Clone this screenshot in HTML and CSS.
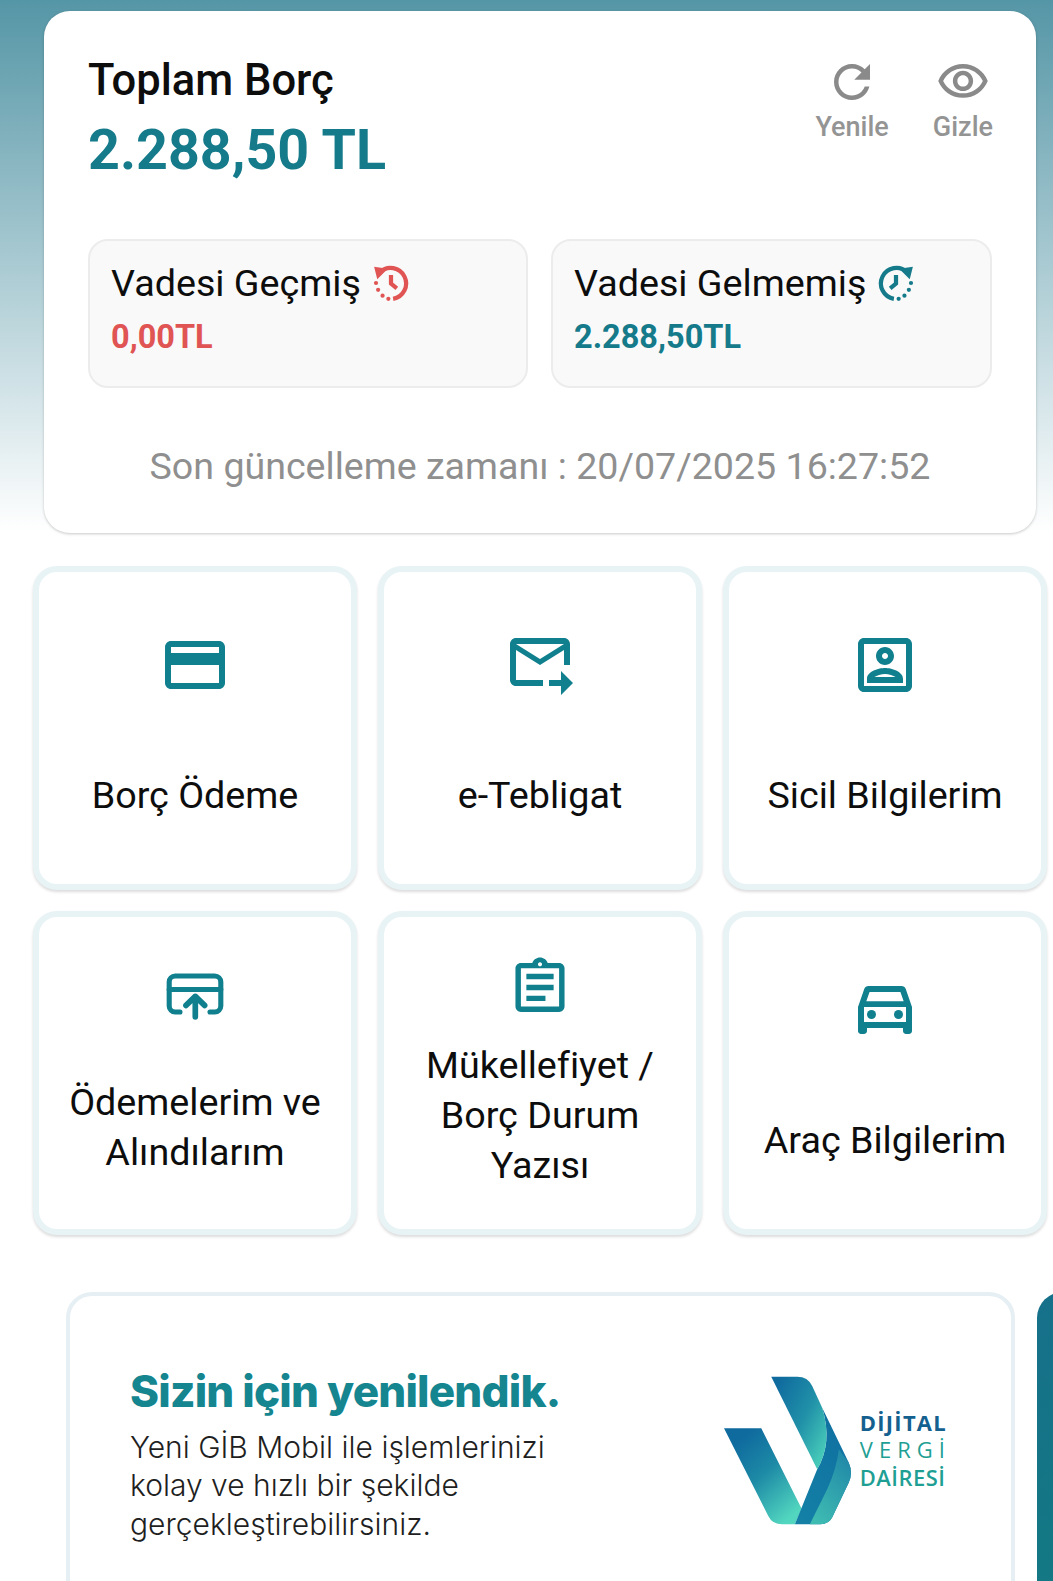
FILE: index.html
```html
<!DOCTYPE html>
<html lang="tr">
<head>
<meta charset="utf-8">
<title>GİB Mobil</title>
<link rel="stylesheet" href="styles.css">
</head>
<body>
<section class="summary">
  <header class="summary-head">
    <div>
      <h1 class="summary-title">Toplam Borç</h1>
      <div class="summary-total">2.288,50 TL</div>
    </div>
    <div class="actions">
      <button class="action action-refresh">
        <svg class="action-icon" viewBox="0 0 24 24"><path d="M17.65 6.35C16.2 4.9 14.21 4 12 4c-4.42 0-7.99 3.58-7.99 8s3.57 8 7.99 8c3.73 0 6.84-2.55 7.73-6h-2.08c-.82 2.33-3.04 4-5.65 4-3.31 0-6-2.69-6-6s2.69-6 6-6c1.66 0 3.14.69 4.22 1.78L13 11h7V4l-2.35 2.35z"/></svg>
        <span>Yenile</span>
      </button>
      <button class="action action-hide">
        <svg class="action-icon" viewBox="0 0 24 24"><path d="M12 6c3.79 0 7.17 2.13 8.82 5.5C19.17 14.87 15.79 17 12 17s-7.17-2.13-8.82-5.5C4.83 8.13 8.21 6 12 6m0-2C7 4 2.73 7.11 1 11.5 2.73 15.89 7 19 12 19s9.27-3.11 11-7.5C21.27 7.11 17 4 12 4zm0 5c1.38 0 2.5 1.12 2.5 2.5S13.38 14 12 14s-2.5-1.12-2.5-2.5S10.62 9 12 9m0-2c-2.48 0-4.5 2.02-4.5 4.5S9.52 16 12 16s4.5-2.02 4.5-4.5S14.48 7 12 7z"/></svg>
        <span>Gizle</span>
      </button>
    </div>
  </header>
  <div class="dues">
    <div class="due">
      <div class="due-label">Vadesi Geçmiş
        <svg class="due-icon due-icon-past" viewBox="0 0 36 36">
          <path class="clock-arc" d="M7.5 7.5A14.8 14.8 0 1 1 20 33"/>
          <path class="clock-head" d="M2 2.5l13 2-10 10z"/>
          <path class="clock-hand" d="M18 10.5v8l5.5 4.5"/>
          <circle class="clock-dot" cx="3.8" cy="18" r="2"/>
          <circle class="clock-dot" cx="5.8" cy="24.5" r="2"/>
          <circle class="clock-dot" cx="10" cy="30" r="2"/>
          <circle class="clock-dot" cx="15.5" cy="33" r="2"/>
        </svg>
      </div>
      <div class="due-value due-value-past">0,00TL</div>
    </div>
    <div class="due">
      <div class="due-label">Vadesi Gelmemiş
        <svg class="due-icon due-icon-future" viewBox="0 0 36 36">
          <g transform="matrix(-1 0 0 1 36 0)">
            <path class="clock-arc" d="M7.5 7.5A14.8 14.8 0 1 1 20 33"/>
            <path class="clock-head" d="M2 2.5l13 2-10 10z"/>
            <path class="clock-hand" d="M18 10.5v8l5.5 4.5"/>
            <circle class="clock-dot" cx="3.8" cy="18" r="2"/>
            <circle class="clock-dot" cx="5.8" cy="24.5" r="2"/>
            <circle class="clock-dot" cx="10" cy="30" r="2"/>
            <circle class="clock-dot" cx="15.5" cy="33" r="2"/>
          </g>
        </svg>
      </div>
      <div class="due-value due-value-future">2.288,50TL</div>
    </div>
  </div>
  <p class="updated">Son güncelleme zamanı : 20/07/2025 16:27:52</p>
</section>

<nav class="tiles">
  <a class="tile">
    <svg class="tile-icon" viewBox="0 0 24 24"><path d="M20 4H4c-1.11 0-1.99.89-1.99 2L2 18c0 1.11.89 2 2 2h16c1.11 0 2-.89 2-2V6c0-1.11-.89-2-2-2zm0 14H4v-6h16v6zm0-10H4V6h16v2z"/></svg>
    <span class="tile-label">Borç Ödeme</span>
  </a>
  <a class="tile">
    <svg class="tile-icon" viewBox="0 1 24 24"><path d="M20 4H4c-1.1 0-2 .9-2 2v12c0 1.1.9 2 2 2h9v-2H4V8l8 5 8-5v5h2V6c0-1.1-.9-2-2-2zm-8 7L4 6h16l-8 5zm7 4 4 4-4 4v-3h-4v-2h4v-3z"/></svg>
    <span class="tile-label">e-Tebligat</span>
  </a>
  <a class="tile">
    <svg class="tile-icon" viewBox="0 0 24 24"><path d="M12 12c1.65 0 3-1.35 3-3s-1.35-3-3-3-3 1.35-3 3 1.35 3 3 3zm0-4c.55 0 1 .45 1 1s-.45 1-1 1-1-.45-1-1 .45-1 1-1zm6 8.58c0-2.5-3.97-3.58-6-3.58s-6 1.08-6 3.58V18h12v-1.42zM8.48 16c.74-.51 2.23-1 3.52-1s2.78.49 3.52 1H8.48zM19 3H5c-1.1 0-2 .9-2 2v14c0 1.1.9 2 2 2h14c1.1 0 2-.9 2-2V5c0-1.1-.9-2-2-2zm0 16H5V5h14v14z"/></svg>
    <span class="tile-label">Sicil Bilgilerim</span>
  </a>
  <a class="tile">
    <svg class="tile-icon tile-icon-stroke" viewBox="0 0 24 24">
      <path d="M7 17H5.4a2 2 0 0 1-2-2V7a2 2 0 0 1 2-2h13.2a2 2 0 0 1 2 2v8a2 2 0 0 1-2 2H17"/>
      <path d="M3.4 9.5h17.2"/>
      <path class="arrow-stroke" d="M12.1 18.6v-6.8M9 14.8l3.1-3 3.1 3"/>
    </svg>
    <span class="tile-label">Ödemelerim ve Alındılarım</span>
  </a>
  <a class="tile">
    <svg class="tile-icon" viewBox="-1.2 -2.1 26.4 26.4"><path d="M19 3h-4.18C14.4 1.84 13.3 1 12 1c-1.3 0-2.4.84-2.82 2H5c-1.1 0-2 .9-2 2v14c0 1.1.9 2 2 2h14c1.1 0 2-.9 2-2V5c0-1.1-.9-2-2-2zm-7-.25c.22 0 .41.1.55.25.12.13.2.31.2.5 0 .41-.34.75-.75.75s-.75-.34-.75-.75c0-.19.08-.37.2-.5.14-.15.33-.25.55-.25zM19 19H5V5h14v14zM7 15h7v2H7zm0-4h10v2H7zm0-4h10v2H7z"/></svg>
    <span class="tile-label">Mükellefiyet / Borç Durum Yazısı</span>
  </a>
  <a class="tile">
    <svg class="tile-icon" viewBox="0 1 24 24"><path d="M18.92 6.01C18.72 5.42 18.16 5 17.5 5h-11c-.66 0-1.21.42-1.42 1.01L3 12v8c0 .55.45 1 1 1h1c.55 0 1-.45 1-1v-1h12v1c0 .55.45 1 1 1h1c.55 0 1-.45 1-1v-8l-2.08-5.99zM6.85 7h10.29l1.08 3.11H5.77L6.85 7zM19 17H5v-5h14v5z"/><circle cx="7.5" cy="14.5" r="1.5"/><circle cx="16.5" cy="14.5" r="1.5"/></svg>
    <span class="tile-label">Araç Bilgilerim</span>
  </a>
</nav>

<section class="carousel">
  <article class="slide">
    <div class="slide-copy">
      <h2 class="slide-title">Sizin için yenilendik.</h2>
      <p class="slide-text">Yeni GİB Mobil ile işlemlerinizi<br>kolay ve hızlı bir şekilde<br>gerçekleştirebilirsiniz.</p>
    </div>
    <svg class="logo" viewBox="70 105 670 450">
      <defs>
        <linearGradient id="logoLeft" x1="0.15" y1="0.15" x2="0.75" y2="1">
          <stop offset="0" stop-color="#0f6a9e"/><stop offset="0.45" stop-color="#1d8aa6"/><stop offset="1" stop-color="#52d6bf"/>
        </linearGradient>
        <linearGradient id="logoTop" x1="0.1" y1="0.05" x2="0.95" y2="0.8">
          <stop offset="0" stop-color="#0f6a9e"/><stop offset="0.55" stop-color="#2090a8"/><stop offset="1" stop-color="#45c8b8"/>
        </linearGradient>
        <linearGradient id="logoBlue" x1="0.7" y1="0" x2="0.2" y2="1">
          <stop offset="0" stop-color="#0f6fa0"/><stop offset="1" stop-color="#1480a6"/>
        </linearGradient>
        <linearGradient id="logoFront" x1="0.7" y1="0" x2="0.2" y2="1">
          <stop offset="0" stop-color="#2189a8"/><stop offset="1" stop-color="#3fbcb2"/>
        </linearGradient>
      </defs>
      <path fill="url(#logoLeft)" d="M70 262H182L303 503 283 550H245Q215 550 203 525Z"/>
      <path fill="url(#logoBlue)" d="M365 200 445 365Q458 395 445 425L395 530Q385 550 360 550H283L350 385Q397 305 365 200Z"/>
      <path fill="url(#logoFront)" d="M415 325 445 365Q458 395 445 425L395 530Q385 550 360 550H328L380 445Q408 385 415 325Z"/>
      <path fill="url(#logoTop)" d="M212 107H290Q322 107 335 135L365 200Q397 305 350 385Z"/>
      <text class="logo-word logo-word-strong" x="478" y="270" textLength="258">DİJİTAL</text>
      <text class="logo-word logo-word-light" x="478" y="352" textLength="256">VERGİ</text>
      <text class="logo-word logo-word-medium" x="478" y="435" textLength="256">DAİRESİ</text>
    </svg>
  </article>
  <div class="slide-next"></div>
</section>
</body>
</html>
```

FILE: styles.css
```css
* {
  box-sizing: border-box;
}

html,
body {
  height: 1581px;
  overflow: hidden;
}

body {
  margin: 0;
  padding-top: 11px;
  font-family: Roboto, "Noto Sans", sans-serif;
  background: #fff linear-gradient(#5596a6 0, #fff 100%) no-repeat;
  background-size: 100% 532px;
  color: #0d0d0d;
}

.summary {
  margin: 0 17px 0 44px;
  height: 522px;
  padding: 41px 44px 0;
  background: #fff;
  border-radius: 26px;
  box-shadow: 0 1px 3px rgba(0, 0, 0, 0.22);
}

.summary-head {
  display: flex;
  justify-content: space-between;
  height: 187px;
}

.summary-title {
  margin: 0;
  font-size: 43.5px;
  line-height: 58px;
  font-weight: 500;
}

.summary-total {
  margin-top: 7px;
  font-size: 55.6px;
  line-height: 66px;
  font-weight: 700;
  color: #157a8a;
}

.actions {
  display: flex;
  gap: 44px;
  margin-right: -1px;
  padding-top: 3px;
}

.action {
  display: flex;
  flex-direction: column;
  align-items: center;
  height: 100px;
  padding: 0;
  border: 0;
  background: none;
  font: 500 27px/36px Roboto, sans-serif;
  color: #949494;
}

.action-icon {
  width: 54px;
  height: 54px;
  margin-bottom: 0;
  fill: #8a8a8a;
}

.dues {
  display: grid;
  grid-template-columns: 440px 441px;
  gap: 23px;
}

.due {
  height: 149px;
  padding: 17px 21px 0;
  background: #f9f9f9;
  border: 2px solid #ececec;
  border-radius: 20px;
}

.due-label {
  display: flex;
  align-items: center;
  gap: 11px;
  font-size: 37.7px;
  line-height: 50px;
}

.due-icon {
  width: 38px;
  height: 38px;
  flex: none;
}

.due-icon-past {
  color: #e05454;
}

.due-icon-future {
  color: #157a8a;
}

.clock-arc,
.clock-hand {
  fill: none;
  stroke: currentColor;
  stroke-width: 4;
}

.clock-head,
.clock-dot {
  fill: currentColor;
}

.due-value {
  margin-top: 8px;
  font-size: 32.5px;
  line-height: 42px;
  font-weight: 700;
}

.due-value-past {
  color: #e05454;
}

.due-value-future {
  color: #157a8a;
}

.updated {
  margin: 53px 0 0;
  text-align: center;
  font-size: 37.6px;
  line-height: 50px;
  color: #8f8f8f;
}

.tiles {
  display: grid;
  grid-template-columns: repeat(3, 324px);
  grid-auto-rows: 324px;
  gap: 21px;
  margin: 33px 0 0 33px;
}

.tile {
  display: flex;
  flex-direction: column;
  align-items: center;
  justify-content: space-around;
  padding: 22px 0 30px;
  background: #fff;
  border: 6px solid #e8f3f6;
  border-radius: 24px;
  box-shadow: 0 2px 3px rgba(0, 0, 0, 0.14);
}

.tile-icon {
  width: 72px;
  height: 72px;
  flex: none;
  fill: #10808e;
}

.tile-icon-stroke {
  fill: none;
  stroke: #10808e;
  stroke-width: 1.7;
  stroke-linecap: round;
  stroke-linejoin: round;
}

.arrow-stroke {
  stroke-width: 1.9;
}

.tile-label {
  padding: 0 24px;
  text-align: center;
  font-size: 37.7px;
  line-height: 50px;
}

.carousel {
  display: flex;
  gap: 22px;
  margin: 57px 0 0 66px;
}

.slide {
  flex: none;
  display: flex;
  justify-content: space-between;
  width: 949px;
  height: 340px;
  padding: 66px 64px 0 60px;
  background: #fff;
  border: 4px solid #e6eff3;
  border-radius: 26px;
}

.slide-title {
  margin: 0;
  font-family: Inter, sans-serif;
  font-size: 44px;
  line-height: 58px;
  font-weight: 800;
  letter-spacing: -0.8px;
  color: #15858f;
}

.slide-text {
  margin: 8px 0 0;
  font-family: Inter, sans-serif;
  font-size: 30px;
  line-height: 38.3px;
  font-weight: 300;
  letter-spacing: 0;
  color: #1f1f1f;
}

.logo {
  flex: none;
  width: 223px;
  height: 150px;
  margin-top: 14px;
}

.logo-word {
  font-family: "Open Sans", sans-serif;
  font-size: 66px;
}

.logo-word-strong {
  font-weight: 700;
  fill: #14608f;
}

.logo-word-light {
  font-weight: 500;
  fill: #1f9f94;
}

.logo-word-medium {
  font-weight: 600;
  fill: #1f9f94;
}

.slide-next {
  flex: none;
  width: 40px;
  height: 340px;
  background: linear-gradient(#16708a, #137a82);
  border-radius: 26px 0 0 26px;
}
```
